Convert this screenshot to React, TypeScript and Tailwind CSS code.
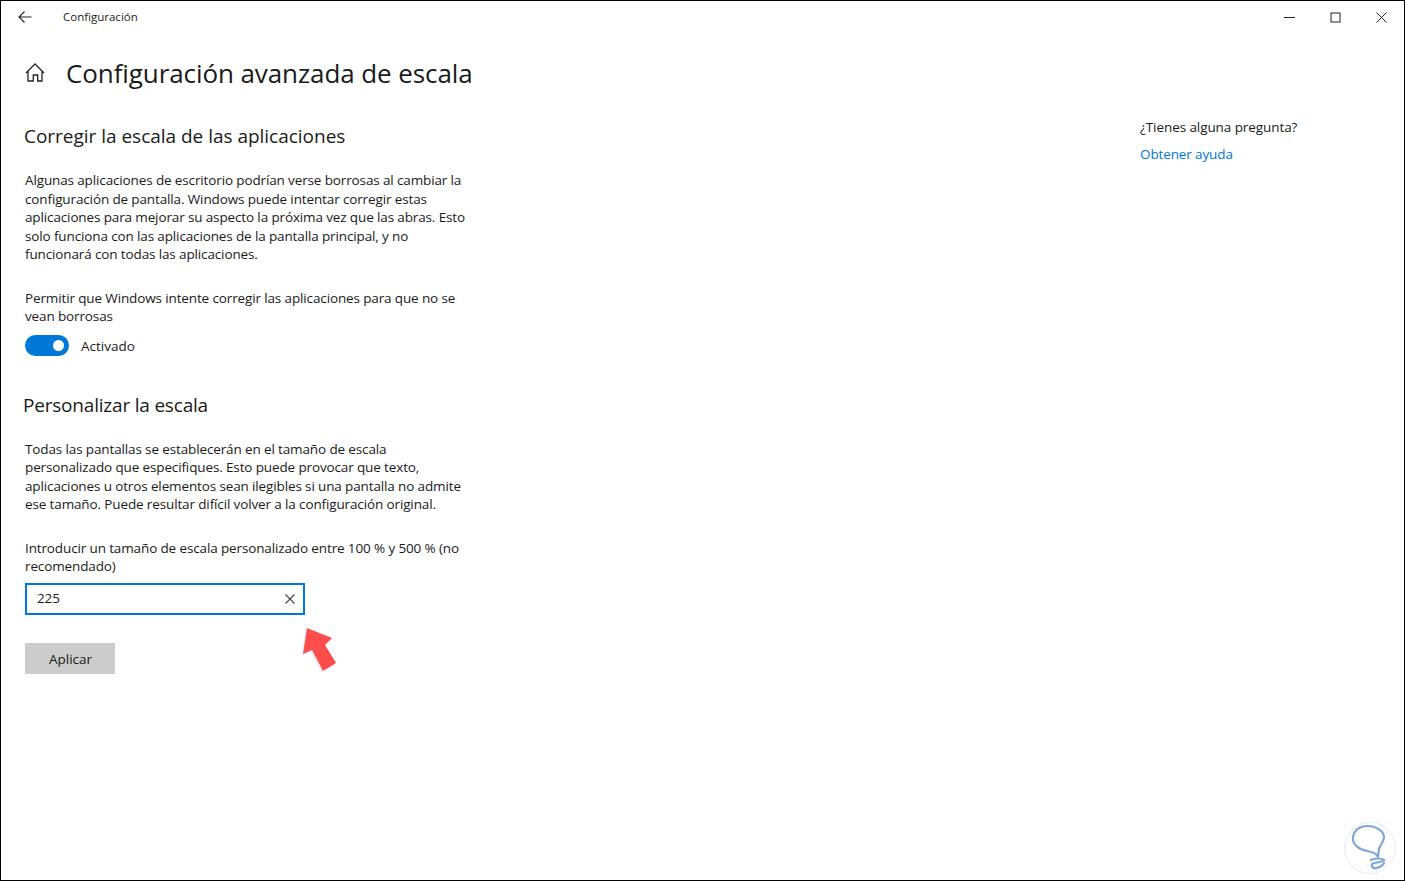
import React from "react";

function Paragraph({ lines, className }: { lines: string[]; className?: string }) {
  return (
    <p className={"ml-px text-[13.5px] leading-[18.5px] tracking-[-0.13px] text-[#1a1a1a] whitespace-nowrap " + (className ?? "")}>
      {lines.map((l, i) => (
        <span key={i} className="block">
          {l}
        </span>
      ))}
    </p>
  );
}

function TitleBar() {
  return (
    <div className="flex h-[31px] items-center">
      <div className="flex w-[62px] justify-center pr-[15px]">
        <svg width="14" height="14" viewBox="0 0 14 14" fill="none" stroke="#222" strokeWidth="1.1">
          <path d="M13.5 7H1M6.5 1.5L1 7l5.5 5.5" />
        </svg>
      </div>
      <span className="text-[11.5px] text-[#222]">Configuración</span>
      <div className="ml-auto flex items-center pt-[2px]">
        <div className="flex w-[46px] justify-center">
          <svg width="11" height="11" viewBox="0 0 11 11" stroke="#222" strokeWidth="1" fill="none">
            <path d="M0 5.5h11" />
          </svg>
        </div>
        <div className="flex w-[46px] justify-center">
          <svg width="11" height="11" viewBox="0 0 11 11" stroke="#222" strokeWidth="1" fill="none">
            <rect x="1" y="1" width="9" height="9" />
          </svg>
        </div>
        <div className="flex w-[46px] justify-center">
          <svg width="11" height="11" viewBox="0 0 11 11" stroke="#222" strokeWidth="1" fill="none">
            <path d="M.5.5l10 10M10.5.5l-10 10" />
          </svg>
        </div>
      </div>
    </div>
  );
}

export default function App() {
  return (
    <div className="relative flex h-[881px] w-[1405px] flex-col overflow-hidden border border-black bg-white font-['Open_Sans','Noto_Sans',sans-serif]">
      <TitleBar />
      <div className="flex flex-1">
        <main className="flex w-[1116px] flex-col pl-[23px]">
          <div className="mt-[21px] flex h-[40px] items-center">
            <svg width="22" height="22" viewBox="0 0 22 22" fill="none" stroke="#222" strokeWidth="1.3" className="mr-[20px]">
              <path d="M2 11L11 2l9 9M4 9v10h5.3v-6h4.4v6H18V9" />
            </svg>
            <h1 className="text-[26px] leading-[40px] tracking-[-0.09px] text-[#1a1a1a]">Configuración avanzada de escala</h1>
          </div>
          <h2 className="mt-[29px] text-[19px] leading-[28px] tracking-[-0.02px] text-[#1a1a1a]">Corregir la escala de las aplicaciones</h2>
          <Paragraph
            className="mt-[21px]"
            lines={[
              "Algunas aplicaciones de escritorio podrían verse borrosas al cambiar la",
              "configuración de pantalla. Windows puede intentar corregir estas",
              "aplicaciones para mejorar su aspecto la próxima vez que las abras. Esto",
              "solo funciona con las aplicaciones de la pantalla principal, y no",
              "funcionará con todas las aplicaciones.",
            ]}
          />
          <Paragraph
            className="mt-[25px]"
            lines={["Permitir que Windows intente corregir las aplicaciones para que no se", "vean borrosas"]}
          />
          <div className="ml-px mt-[9px] flex h-[21px]">
            <div className="flex h-[21px] w-[44px] items-center justify-end rounded-full bg-[#0078d7] pr-[5px]">
              <div className="h-[11px] w-[11px] rounded-full bg-white" />
            </div>
            <span className="ml-[12px] h-[21px] text-[13.5px] leading-[23px] text-[#1a1a1a]">Activado</span>
          </div>
          <h2 className="mt-[35px] -ml-px text-[19px] leading-[28px] tracking-[-0.2px] text-[#1a1a1a]">Personalizar la escala</h2>
          <Paragraph
            className="mt-[21px]"
            lines={[
              "Todas las pantallas se establecerán en el tamaño de escala",
              "personalizado que especifiques. Esto puede provocar que texto,",
              "aplicaciones u otros elementos sean ilegibles si una pantalla no admite",
              "ese tamaño. Puede resultar difícil volver a la configuración original.",
            ]}
          />
          <Paragraph
            className="mt-[25px]"
            lines={["Introducir un tamaño de escala personalizado entre 100 % y 500 % (no", "recomendado)"]}
          />
          <div className="ml-px mt-[7px] flex h-[32px] w-[280px] items-center border-2 border-[#0078d7] pl-[10px] pr-[8px]">
            <span className="text-[13.5px] tracking-[-0.13px] text-[#1a1a1a]">225</span>
            <svg width="10" height="10" viewBox="0 0 10 10" fill="none" stroke="#444" strokeWidth="1.1" className="ml-auto">
              <path d="M.5.5l9 9M9.5.5l-9 9" />
            </svg>
          </div>
          <button className="ml-px mt-[28px] h-[31px] w-[90px] bg-[#cccccc] pl-px pt-[2px] text-[13.5px] text-[#1a1a1a]">Aplicar</button>
        </main>
        <aside className="flex flex-col pl-[23px] pt-[85px]">
          <span className="text-[13.5px] leading-[20px] tracking-[-0.08px] text-[#1a1a1a]">¿Tienes alguna pregunta?</span>
          <a className="mt-[7px] text-[13.5px] leading-[20px] tracking-[-0.12px] text-[#0078d7]">Obtener ayuda</a>
        </aside>
      </div>
      {/* flecha roja */}
      <svg className="absolute left-[299px] top-[624px]" width="40" height="50" viewBox="0 0 40 50">
        <path d="M7 3L32 13 25 20 36 38 23 46 12 25 3 29Z" fill="#ececec" transform="translate(-1.5 1.5)" />
        <path d="M7 3L32 13 25 20 36 38 23 46 12 25 3 29Z" fill="#ff4d4d" />
      </svg>
      {/* logo */}
      <svg className="absolute left-[1342px] top-[820px]" width="54" height="54" viewBox="0 0 54 54" fill="none">
        <circle cx="27" cy="27" r="25.5" stroke="#e3ecf5" strokeWidth="1" />
        <path
          d="M35 36C33 31 28 31 24 30C15 28 9 23 10 16C11 9 17 5 24 5C33 5 41 10 41 16C41 21 37 24 36 28C35.5 31 35.5 33 35 36"
          stroke="#7ea7d8"
          strokeWidth="2.2"
          strokeLinecap="round"
        />
        <path d="M28 39C31 37 38 37 41 39C39 42 31 41 29 43C28 46 31 48 34 47C37 46 40 44 41 42" stroke="#7ea7d8" strokeWidth="2.2" strokeLinecap="round" />
      </svg>
    </div>
  );
}
